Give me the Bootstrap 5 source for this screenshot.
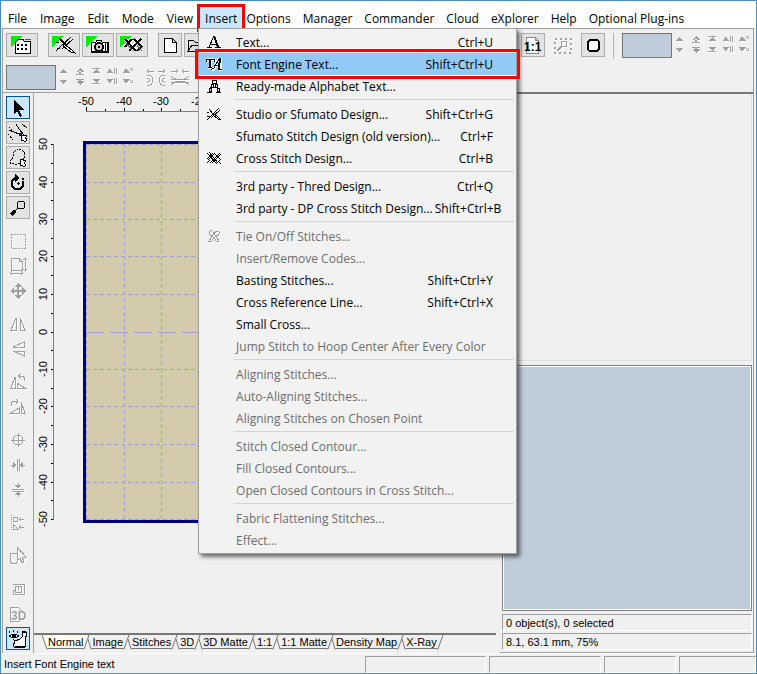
<!DOCTYPE html>
<html lang="en">
<head>
<meta charset="utf-8">
<meta name="viewport" content="width=device-width, initial-scale=1">
<title>Embroidery editor</title>
<link href="https://cdn.jsdelivr.net/npm/bootstrap@5.3.0/dist/css/bootstrap.min.css" rel="stylesheet">
<style>
:root{--face:#f0f0f0;--line:#a0a0a0;--slate:#bfccda;--dim:#6d6d6d;--ui:"Open Sans","Noto Sans",sans-serif;--sys:"Liberation Sans",Arial,sans-serif}
body{background:var(--face);color:#000;font:11px/16px var(--sys)}
button{font:inherit;color:inherit;padding:0;border:0;background:none;text-align:left}
svg{display:block;flex:none}
.tool svg,.pic,.off{shape-rendering:crispEdges}
.app{border:1px solid #4a8db7}
.menubar{background:#fff;height:27px;font:12px/17px var(--ui);padding:8px 0 0 1px}
.menubar .top{padding:0 6px;height:18px;white-space:nowrap}
.menubar .early{margin-right:1px}
.insert-wrap{margin-left:2px}
.menubar .insert-top{padding:0 3px;background:#cce8ff;box-shadow:0 0 0 2px #cce8ff;outline:3px solid #f00;outline-offset:2px}
.drop{position:absolute;z-index:5;left:-4px;top:19px;width:319px;padding:2px 0;background:#f2f2f2;border:1px solid var(--line);box-shadow:3px 3px 4px rgba(0,0,0,.55)}
.drop ul{margin:0;padding:0;list-style:none}
.entry{display:flex;align-items:center;gap:2px;width:100%;height:22px;padding:0 23px 0 7px;white-space:nowrap}
.entry .pic{width:16px;height:16px;margin-right:12px;flex:none}
.entry:disabled{color:var(--dim)}
.entry.chosen{background:#91c9f7;outline:3px solid #f00;outline-offset:1px;position:relative}
.rule{height:6px;padding:2px 2px 0 35px}
.rule div{height:1px;background:#d4d4d4}
.tools{border-top:1px solid var(--line);height:64px;margin:0 2px 0 1px;padding:4px 1px 0 3px;border-left:1px solid var(--line);border-right:1px solid var(--line)}
.tool{display:flex;align-items:center;justify-content:center;height:24px;background:#e3e3e3;border:1px solid #adadad}
.tool.wide{width:32px}
.tool.sq{width:24px}
.gap-l{margin-left:10px}
.gap-s{margin-left:2px}
.second{padding-top:6px}
.swatch{width:50px;height:25px;background:var(--slate);border:1px solid #767676}
.off{color:#a0a0a0;filter:drop-shadow(1px 1px 0 #fff)}
.stage{padding:0 2px 0 1px}
.side{width:32px;border-left:1px solid var(--line);border-right:1px solid var(--line);padding:3px 0 0 3px;border-top:1px solid var(--line)}
.side .tool{width:24px;height:23px;margin-bottom:2px;flex:none}
.side .flat{background:none;border-color:transparent}
.side .gap-top{margin-top:8px}
.tool.on{background:#cce8ff;border-color:#005499}
.work{border-top:1px solid var(--line);overflow:hidden}
.tabs{border-top:2px solid #777;height:20px;margin-right:4px;padding-left:8px}
.tabs button{height:14px;line-height:15px;border-bottom:1px solid #777;white-space:nowrap}
.tabs .front{background:#fffbf0}
.info{width:254px;border-top:2px solid #777;border-right:1px solid var(--line);border-bottom:1px solid var(--line);padding:0 1px 2px 2px}
.preview{height:267px;border-right:1px solid #ddd;border-bottom:1px solid #ddd}
.thumbs{background:var(--slate);border:1px solid #808088;outline:1px solid #fff;outline-offset:-2px;margin:4px 0 3px}
.sunk{border:1px solid var(--line);border-right-color:#fff;border-bottom-color:#fff}
.info .sunk{height:17px;padding-left:3px}
.info .sunk+.sunk{margin-top:2px}
.status{height:20px;border-top:1px solid #fff;padding:2px 0 0 3px;gap:3px}
.status .sunk{height:17px}
.s1{width:121px}.s2{width:112px}.s3{width:72px}.s4{width:77px}
</style>
<script src="https://cdn.jsdelivr.net/npm/bootstrap@5.3.0/dist/js/bootstrap.bundle.min.js"></script>
</head>
<body>
<svg width="0" height="0" class="position-absolute" aria-hidden="true">
<symbol id="pager" viewBox="0 0 80 24"><g fill="currentColor" stroke="none">
<path d="M3 8h8l-4-4zM3 15h8l-4 4zM20 7h8l-4-4zM20 9h8v1h-8zM23 6h2v4h-2zM20 14h8v1h-8zM20 16h8l-4 4zM23 14h2v3h-2zM36 8h8l-4-4zM36 3h8v1h-8zM36 14h8l-4 4zM36 18h8v1h-8zM51 8h6l-3-5zM58 3h1v6h-1zM60 3h1v6h-1zM51 14h6l-3 5zM58 13h1v6h-1zM60 13h1v6h-1zM67 8h7l-4-5zM67 14h7l-4 5z"/></g><path d="M74 3l3 3M77 3l-3 3M74 15l3 3M77 15l-3 3" stroke="currentColor" fill="none"/></symbol>
<symbol id="cut" viewBox="0 0 20 18"><path d="M1 2h7M3 0L1 2l2 2M12 2h7M17 0l2 2-2 2M1 6q6 0 6 5t-6 6M19 6q-6 0-6 5t6 6M1 9q3 1 3 2t-3 3M19 9q-3 1-3 2t3 3" fill="none" stroke="currentColor"/></symbol>
<symbol id="join" viewBox="0 0 20 18"><path d="M1 2h7M6 0l2 2-2 2M12 2h7M14 0l-2 2 2 2M1 7q9 8 18 0M1 16q9-8 18 0M1 10h18M1 13h18" fill="none" stroke="currentColor"/></symbol>
<symbol id="needle" viewBox="0 0 22 18"><path d="M2 7l3-1M2 15l6-6M8 9L17 1M19 3L8 13M5 3l6 6M3 13l3-1" fill="none" stroke="#000"/><path d="M10 8l8 6 3 3-4-1-8-6z" fill="#fff" stroke="#000"/><path d="M6 3l6 6" stroke="#000" stroke-width="2"/></symbol>
<symbol id="crosses" viewBox="0 0 22 18"><path d="M3 3l11 12M10 3L3 11M12 3l8 8M19 3L7 15M19 10l-5 5" fill="none" stroke="#fff" stroke-width="4"/><path d="M3 3l11 12M10 3L3 11M12 3l8 8M19 3L7 15M20 10l-5 5" fill="none" stroke="#000" stroke-width="2"/><path d="M3 6l8 9M13 7l7 8" stroke="#666"/></symbol>
</svg>
<div class="app d-flex flex-column min-vh-100">
<nav class="menubar d-flex flex-nowrap" aria-label="Main menu">
<button class="top early">File</button><button class="top early">Image</button><button class="top early">Edit</button><button class="top early">Mode</button><button class="top early">View</button>
<div class="position-relative insert-wrap"><button class="top insert-top" aria-expanded="true">Insert</button>
<div class="drop"><ul>
<li><button class="entry"><svg class="pic" viewBox="0 0 16 16"><path d="M1 13.500h5M9 13.500h6M3 13l5-11M5 10.500h6" fill="none" stroke="#000"/><path d="M8 2l4 11" stroke="#000" stroke-width="2"/></svg><span>Text...</span><span class="ms-auto">Ctrl+U</span></button></li>
<li><button class="entry chosen"><svg class="pic" viewBox="0 0 16 16"><path d="M0 3h8M0 3v3M8 3v3M4 3v8M2 11h4M6 14q2 0 4-6l3-6M14 2v11M8 9h7M13 13h3" fill="none" stroke="#fff" stroke-width="3"/><path d="M0 6V3h8v3M4 3v8M2 11h4M5 13q3 1 5-5l4-6-1 11h3M8 9h6" fill="none" stroke="#000"/><path d="M14 2l-1 11M4 3v8" stroke="#000" stroke-width="2"/></svg><span>Font Engine Text...</span><span class="ms-auto">Shift+Ctrl+U</span></button></li>
<li><button class="entry"><svg class="pic" viewBox="0 0 16 16"><path d="M6 2h4v3H6zM5 6h2v3H5zM9 6h2v3H9zM4 9h8M3 10h2v3H3zM11 10h2v3h-2zM1 14h5M10 14h5" fill="none" stroke="#000"/></svg><span>Ready-made Alphabet Text...</span></button></li>
<li class="rule"><div></div></li>
<li><button class="entry"><svg class="pic" viewBox="0 0 16 16"><path d="M3 3l4 5M1 7l2-1M1 14l5-5 7-7M14 4L5 12M1 11l3-1" fill="none" stroke="#000"/><path d="M7 7l5 4 3 3-3-1-5-4z" fill="#fff" stroke="#000"/></svg><span>Studio or Sfumato Design...</span><span class="ms-auto">Shift+Ctrl+G</span></button></li>
<li><button class="entry"><span class="pic"></span><span>Sfumato Stitch Design (old version)...</span><span class="ms-auto">Ctrl+F</span></button></li>
<li><button class="entry"><svg class="pic" viewBox="0 0 16 16"><path d="M1 3l9 10M3 2l9 11M7 3L1 9M8 4L2 10M8 3l6 6M14 3L4 13M15 4L6 13M15 9l-5 5M1 13l3-3M12 11l3 3" stroke="#000" fill="none"/></svg><span>Cross Stitch Design...</span><span class="ms-auto">Ctrl+B</span></button></li>
<li class="rule"><div></div></li>
<li><button class="entry"><span class="pic"></span><span>3rd party - Thred Design...</span><span class="ms-auto">Ctrl+Q</span></button></li>
<li><button class="entry"><span class="pic"></span><span>3rd party - DP Cross Stitch Design...</span><span class="ms-auto">Shift+Ctrl+B</span></button></li>
<li class="rule"><div></div></li>
<li><button class="entry" disabled><svg class="pic off" viewBox="0 0 16 16"><path d="M7 7Q3 8 3 5t3-2q2 1 2 4 0-3 3-4 3 0 2 3t-4 1l4 6M7 7l-4 6h3l2-4 2 4h3" fill="none" stroke="currentColor"/></svg><span>Tie On/Off Stitches...</span></button></li>
<li><button class="entry" disabled><span class="pic"></span><span>Insert/Remove Codes...</span></button></li>
<li><button class="entry"><span class="pic"></span><span>Basting Stitches...</span><span class="ms-auto">Shift+Ctrl+Y</span></button></li>
<li><button class="entry"><span class="pic"></span><span>Cross Reference Line...</span><span class="ms-auto">Shift+Ctrl+X</span></button></li>
<li><button class="entry"><span class="pic"></span><span>Small Cross...</span></button></li>
<li><button class="entry" disabled><span class="pic"></span><span>Jump Stitch to Hoop Center After Every Color</span></button></li>
<li class="rule"><div></div></li>
<li><button class="entry" disabled><span class="pic"></span><span>Aligning Stitches...</span></button></li>
<li><button class="entry" disabled><span class="pic"></span><span>Auto-Aligning Stitches...</span></button></li>
<li><button class="entry" disabled><span class="pic"></span><span>Aligning Stitches on Chosen Point</span></button></li>
<li class="rule"><div></div></li>
<li><button class="entry" disabled><span class="pic"></span><span>Stitch Closed Contour...</span></button></li>
<li><button class="entry" disabled><span class="pic"></span><span>Fill Closed Contours...</span></button></li>
<li><button class="entry" disabled><span class="pic"></span><span>Open Closed Contours in Cross Stitch...</span></button></li>
<li class="rule"><div></div></li>
<li><button class="entry" disabled><span class="pic"></span><span>Fabric Flattening Stitches...</span></button></li>
<li><button class="entry" disabled><span class="pic"></span><span>Effect...</span></button></li>
</ul></div></div>
<button class="top">Options</button><button class="top">Manager</button><button class="top">Commander</button><button class="top">Cloud</button><button class="top">eXplorer</button><button class="top">Help</button><button class="top">Optional Plug-ins</button>
</nav>

<header class="tools">
<div class="d-flex align-items-start">
<button class="tool wide" aria-label="Open design library"><svg width="22" height="18"><path d="M0 0h11L0 11z" fill="#0e0"/><path d="M4 5h2l1-2h5l1 2h6v12H4z" fill="#fff" stroke="#000"/><path d="M19 4v-1h-5" fill="none" stroke="#555"/><path d="M6 8h2v2H6zM10 8h2v2h-2zM14 8h2v2h-2zM6 12h2v2H6zM10 12h2v2h-2zM14 12h2v2h-2z"/></svg></button>
<button class="tool wide gap-l" aria-label="Studio"><svg width="24" height="18"><path d="M0 0h11L0 11z" fill="#0e0"/><use href="#needle" x="2" width="22" height="18"/></svg></button>
<button class="tool wide gap-s" aria-label="Photo stitch"><svg width="24" height="18"><path d="M0 0h11L0 11z" fill="#0e0"/><path d="M5 6h5l1-2h4l1 2h6v10H5z" fill="#fff" stroke="#000"/><path d="M5 16h17V7" stroke="#000" stroke-width="2" fill="none"/><circle cx="13" cy="11" r="4" fill="#ccc" stroke="#000" stroke-width="2"/><circle cx="13" cy="11" r="1"/><path d="M19 7v8" stroke="#000"/></svg></button>
<button class="tool wide gap-s" aria-label="Cross stitch"><svg width="24" height="18"><path d="M0 0h11L0 11z" fill="#0e0"/><use href="#crosses" x="2" width="22" height="18"/></svg></button>
<button class="tool sq gap-l" aria-label="New"><svg width="16" height="18"><path d="M2 2h8l4 4v10H2zM10 2v4h4" fill="#fff" stroke="#000"/></svg></button>
<button class="tool sq gap-s" aria-label="Open"><svg width="18" height="18"><path d="M1 15V4h5l2 2h6v3M1 15L5 9h12l-4 6z" fill="#ddd" stroke="#000"/></svg></button>
<div class="d-flex align-items-start ms-auto">
<button class="tool sq" aria-label="Actual size"><svg width="20" height="18"><path d="M3 1h9l3 3v13H3zM12 1v3h3" fill="#fff" stroke="#888"/><text x="1" y="15" font-size="12" font-weight="700" font-family="Liberation Sans,sans-serif">1:1</text></svg></button>
<button class="off mx-2 py-1" disabled aria-label="Zoom to selection"><svg width="20" height="18"><path d="M2 2h16v14H2z" fill="none" stroke="currentColor" stroke-width="2" stroke-dasharray="2 3"/><circle cx="11" cy="7" r="3" fill="none" stroke="currentColor"/><path d="M9 9l-5 5" stroke="currentColor" stroke-width="2"/></svg></button>
<button class="tool sq" aria-label="Hoop"><svg width="16" height="16"><rect x="3" y="3" width="11" height="11" rx="3" fill="#fff" stroke="#000" stroke-width="2"/></svg></button>
<div class="vr mx-2"></div>
<div class="swatch"></div><svg class="off" width="80" height="24"><use href="#pager"/></svg>
</div></div>
<div class="d-flex align-items-start second"><div class="swatch"></div><svg class="off" width="80" height="24"><use href="#pager"/></svg><svg class="off gap-l mt-1" width="20" height="18"><use href="#cut"/></svg><svg class="off ms-1 mt-1" width="20" height="18"><use href="#join"/></svg></div>
</header>

<div class="stage d-flex flex-grow-1">
<aside class="side d-flex flex-column flex-shrink-0" aria-label="Tools">
<button class="tool on" aria-label="Select"><svg width="18" height="20"><path d="M5 2v14l3-3 3 6 2-1-3-6h5z"/></svg></button>
<button class="tool" aria-label="Edit nodes"><svg width="20" height="20"><path d="M8 1l3 5 5 6M1 7l10 4 8 5M14 1l5 4" stroke="#000" fill="none"/><path d="M0 11l5 6M1 4l3 3" stroke="#000" stroke-dasharray="2 1"/><path d="M11 10h3v3h-3z" fill="#00f"/><path d="M13 12v6l2-1 2 2 2-2-2-2 2-2z" fill="#fff" stroke="#000"/></svg></button>
<button class="tool" aria-label="Lasso"><svg width="20" height="20"><path d="M6 4q6-5 10 0 2 5-2 9-3 4-7 3-6 0-5-3 4-4 4-9z" fill="none" stroke="#000" stroke-dasharray="2 1"/><path d="M12 11v7l2-1 2 2 2-2-2-2 2-2z" fill="#fff" stroke="#000"/></svg></button>
<button class="tool" aria-label="Rotate"><svg width="18" height="18"><path d="M6 4a6 6 0 1 0 8 3" fill="none" stroke="#000" stroke-width="2"/><path d="M6 0v8l5-4zM8 9h3v1H8zM9 8h1v3H9zM13 4h2v2h-2z"/></svg></button>
<button class="tool" aria-label="Zoom"><svg width="18" height="18"><circle cx="12" cy="6" r="4" fill="#ddd" stroke="#000"/><path d="M9 9l-3 3" stroke="#000"/><path d="M6 12l-4 4" stroke="#000" stroke-width="3"/></svg></button>
<button class="tool flat off gap-top" disabled aria-label="Selection frame"><svg width="18" height="18"><path d="M2 2h14v14H2z" fill="none" stroke="currentColor" stroke-dasharray="2 1"/></svg></button>
<button class="tool flat off" disabled aria-label="Resize"><svg width="18" height="18"><path d="M2 1h8l3 3v9H2zM10 1v3h3M1 16h13M3 14l-2 2 2 2M12 14l2 2-2 2M16 1v13M14 3l2-2 2 2M14 12l2 2 2-2" fill="none" stroke="currentColor"/></svg></button>
<button class="tool flat off" disabled aria-label="Move"><svg width="18" height="18"><path d="M8 8V5H5l4-4 4 4h-3v3h3V5l4 4-4 4v-3h-3v3h3l-4 4-4-4h3v-3H5v3L1 9l4-4v3z" fill="currentColor"/></svg></button>
<button class="tool flat off gap-top" disabled aria-label="Mirror horizontally"><svg width="18" height="18"><path d="M7 3v12H2zM11 3v12h5z" fill="none" stroke="currentColor"/></svg></button>
<button class="tool flat off" disabled aria-label="Mirror vertically"><svg width="18" height="18"><path d="M15 7V2L4 7zM15 11v5L4 11z" fill="none" stroke="currentColor"/></svg></button>
<button class="tool flat off gap-top" disabled aria-label="Rotate left"><svg width="18" height="18"><path d="M6 4v11H2zM8 10l8 5H8zM9 3h4q3 1 3 5M12 1L9 3l3 3" fill="none" stroke="currentColor"/></svg></button>
<button class="tool flat off" disabled aria-label="Rotate right"><svg width="18" height="18"><path d="M12 4v11h4zM10 10l-8 5h8zM9 3H5Q2 4 2 8M7 1l2 2-2 3" fill="none" stroke="currentColor"/></svg></button>
<button class="tool flat off gap-top" disabled aria-label="Center"><svg width="18" height="18"><circle cx="9" cy="9" r="5" fill="none" stroke="currentColor"/><path d="M2 9h14M9 2v14" stroke="currentColor"/></svg></button>
<button class="tool flat off" disabled aria-label="Center horizontally"><svg width="18" height="18"><path d="M8 3v12M10 3v12M2 9h4M12 9h4" stroke="currentColor"/><path d="M4 6l4 3-4 3zM14 6l-4 3 4 3z" fill="currentColor"/></svg></button>
<button class="tool flat off" disabled aria-label="Center vertically"><svg width="18" height="18"><path d="M3 8h12M3 10h12M9 2v4M9 12v4" stroke="currentColor"/><path d="M6 4l3 4 3-4zM6 14l3-4 3 4z" fill="currentColor"/></svg></button>
<button class="tool flat off gap-top" disabled aria-label="Align"><svg width="18" height="18"><path d="M2 1v16" stroke="currentColor" stroke-dasharray="1 1"/><path d="M4 3h4v4H4zM4 10v5h5zM10 5h5M12 3l-2 2 2 2M10 13h5M12 11l-2 2 2 2" fill="none" stroke="currentColor"/></svg></button>
<button class="tool flat off gap-top" disabled aria-label="Pick shape"><svg width="18" height="20"><path d="M8 7H1v8q1 3 4 3t4-4M8 1v14l3-3 2 5 2-1-2-5h4z" fill="none" stroke="currentColor"/></svg></button>
<button class="tool flat off gap-top" disabled aria-label="Outline"><svg width="18" height="18"><path d="M4 4h11v10H4v-4h3M9 6H6v6h6V6H9v4" fill="none" stroke="currentColor"/></svg></button>
<button class="tool flat off" disabled aria-label="3D view"><svg width="20" height="18"><path d="M2 16V2h8l3 3v2M2 16h10" fill="none" stroke="currentColor"/><text x="3" y="15" font-size="12" font-weight="700" font-family="Liberation Sans,sans-serif" fill="currentColor">3D</text></svg></button>
<button class="tool on" aria-label="Preview"><svg width="20" height="20"><path d="M6 11q5 1 8-3l1-4 3-1 1 3-2 3 1 8-3 1H6l-1-3 2-1z" fill="#fff" stroke="#000"/><path d="M1 7q5-4 10 0-5 4-10 0z" fill="#fff" stroke="#000"/><circle cx="6" cy="7" r="2"/><path d="M2 4L1 2M5 3V1M9 4l1-2" stroke="#000"/><path d="M14 3h4M7 18h10" stroke="#000" stroke-width="2"/></svg></button>
</aside>
<main class="work d-flex flex-column flex-grow-1">
<svg width="466" height="440" viewBox="34 93 466 440" font-family="Liberation Sans,sans-serif" font-size="11" text-anchor="middle" shape-rendering="crispEdges">
<rect x="84.5" y="142.5" width="379" height="379" fill="#d4caac" stroke="#000080" stroke-width="3"/>
<path d="M86.5 144V520M124.5 144V520M161.5 144V520M199.5 144V520M236.5 144V520M86 144.500H462M86 182.500H462M86 219.500H462M86 256.500H462M86 294.500H462M86 369.500H462M86 406.500H462M86 444.500H462M86 482.500H462M86 519.500H462" stroke="#a0a0cc" stroke-dasharray="4 3" fill="none"/>
<path d="M86 332.500H462" stroke="#a0a0cc" stroke-dasharray="18 6"/>
<path d="M86.500 107v4.500H462M124.500 108v3M161.500 108v3M199.500 108v3" stroke="#808080" fill="none"/>
<path d="M105.500 109v2M143.500 109v2M180.500 109v2M86.500 107v4M124.500 108v3M161.500 108v3" stroke="#000"/>
<path d="M53.500 144V520" stroke="#808080"/>
<path d="M51 144.500h2M51 163.500h2M51 182.500h2M51 200.500h2M51 219.500h2M51 238.500h2M51 256.500h2M51 275.500h2M51 294.500h2M51 313.500h2M51 332.500h2M51 350.500h2M51 369.500h2M51 388.500h2M51 406.500h2M51 425.500h2M51 444.500h2M51 463.500h2M51 482.500h2M51 500.500h2M51 519.500h2" stroke="#000"/>
<text x="86" y="105">-50</text><text x="124" y="105">-40</text><text x="161" y="105">-30</text><text x="199" y="105">-20</text>
<g transform="rotate(-90)"><text x="-144" y="47">50</text><text x="-182" y="47">40</text><text x="-219" y="47">30</text><text x="-256" y="47">20</text><text x="-294" y="47">10</text><text x="-332" y="47">0</text><text x="-369" y="47">-10</text><text x="-406" y="47">-20</text><text x="-444" y="47">-30</text><text x="-482" y="47">-40</text><text x="-519" y="47">-50</text></g>
</svg>
<div class="tabs d-flex mt-auto" id="tabs"></div>
</main>
<section class="info d-flex flex-column flex-shrink-0">
<div class="preview"></div>
<div class="thumbs flex-grow-1"></div>
<div class="sunk">0 object(s), 0 selected</div>
<div class="sunk">8.1, 63.1 mm, 75%</div>
</section>
</div>
<footer class="status d-flex">
<div class="flex-grow-1">Insert Font Engine text</div><div class="sunk s1"></div><div class="sunk s2"></div><div class="sunk s3"></div><div class="sunk s4"></div>
</footer>
</div>
<script>
// View tabs with slanted dividers
const names=["Normal","Image","Stitches","3D","3D Matte","1:1","1:1 Matte","Density Map","X-Ray"];
const svg=(fill,line)=>`<svg width="9" height="15" fill="none" stroke="#777">${fill}<path d="${line}"/></svg>`;
document.getElementById("tabs").innerHTML=
  `<svg width="6" height="15" fill="none" stroke="#777"><path d="M0 0h6v14H5z" fill="#fffbf0" stroke="none"/><path d="M0 0l5 14h1"/></svg>`+
  names.map((n,i)=>`<button class="${i?"":"front"}">${n}</button>`+
  svg(i?"":'<path d="M0 0h6L1 14H0z" fill="#fffbf0" stroke="none"/>',i<names.length-1?"M0 14h1L6 0M5 4l3 10h1":"M0 14h1L6 0")).join("");
</script>
</body>
</html>
